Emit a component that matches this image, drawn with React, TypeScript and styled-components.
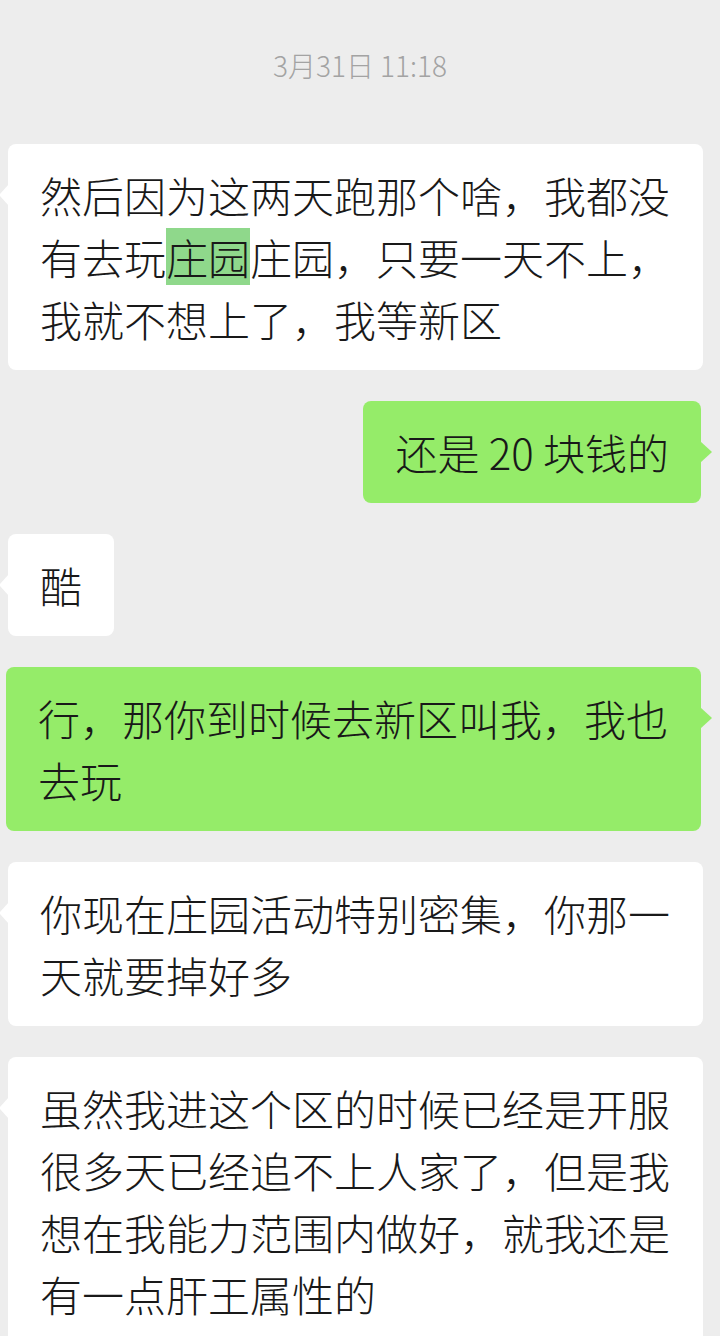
import React from 'react';
import styled, { createGlobalStyle, css } from 'styled-components';

const COLORS = {
  background: '#ededed',
  white: '#ffffff',
  green: '#95ec69',
  text: '#191919',
  time: '#a3a3a3',
  mark: '#8fd88b',
};

const GlobalStyle = createGlobalStyle`
  html, body {
    margin: 0;
    padding: 0;
    background: ${COLORS.background};
  }
  body {
    font-family: "Noto Sans CJK SC", "Noto Sans", sans-serif;
  }
`;

const StyledChat = styled.div`
  display: flex;
  flex-direction: column;
  gap: 31px;
  width: 720px;
  height: 1336px;
  overflow: hidden;
  background: ${COLORS.background};
`;

const TimeStamp = styled.div`
  padding-top: 46px;
  margin-bottom: 29px;
  text-align: center;
  font-size: 28px;
  font-weight: 300;
  line-height: 38px;
  color: ${COLORS.time};
`;

const Row = styled.div<{ $mine?: boolean }>`
  display: flex;
  justify-content: ${(p) => (p.$mine ? 'flex-end' : 'flex-start')};
  padding: ${(p) => (p.$mine ? '0 19px 0 0' : '0 0 0 8px')};
  flex-shrink: 0;
`;

const Bubble = styled.div<{ $mine?: boolean }>`
  position: relative;
  box-sizing: border-box;
  max-width: 695px;
  padding: 20px 32px;
  border-radius: 8px;
  background: ${(p) => (p.$mine ? COLORS.green : COLORS.white)};
  color: ${COLORS.text};
  font-size: 42px;
  font-weight: 300;
  line-height: 62px;
  word-break: break-all;

  &::before {
    content: '';
    position: absolute;
    top: 40px;
    width: 0;
    height: 0;
    border-top: 11px solid transparent;
    border-bottom: 11px solid transparent;
    ${(p) =>
      p.$mine
        ? css`
            right: -11px;
            border-left: 12px solid ${COLORS.green};
          `
        : css`
            left: -9px;
            border-right: 10px solid ${COLORS.white};
          `}
  }
`;

const Mark = styled.span`
  background: linear-gradient(
    transparent 0 1.5px,
    ${COLORS.mark} 1.5px calc(100% - 2.5px),
    transparent calc(100% - 2.5px)
  );
`;

type Message = {
  mine?: boolean;
  content: React.ReactNode;
};

const messages: Message[] = [
  {
    content: (
      <>
        然后因为这两天跑那个啥，我都没有去玩<Mark>庄园</Mark>
        庄园，只要一天不上，我就不想上了，我等新区
      </>
    ),
  },
  { mine: true, content: '还是 20 块钱的' },
  { content: '酷' },
  { mine: true, content: '行，那你到时候去新区叫我，我也去玩' },
  { content: '你现在庄园活动特别密集，你那一天就要掉好多' },
  {
    content:
      '虽然我进这个区的时候已经是开服很多天已经追不上人家了，但是我想在我能力范围内做好，就我还是有一点肝王属性的',
  },
];

const App = () => {
  return (
    <>
      <GlobalStyle />
      <StyledChat>
        <TimeStamp>3月31日 11:18</TimeStamp>
        {messages.map((msg, i) => (
          <Row $mine={msg.mine} key={i}>
            <Bubble $mine={msg.mine}>{msg.content}</Bubble>
          </Row>
        ))}
      </StyledChat>
    </>
  );
};

export default App;
